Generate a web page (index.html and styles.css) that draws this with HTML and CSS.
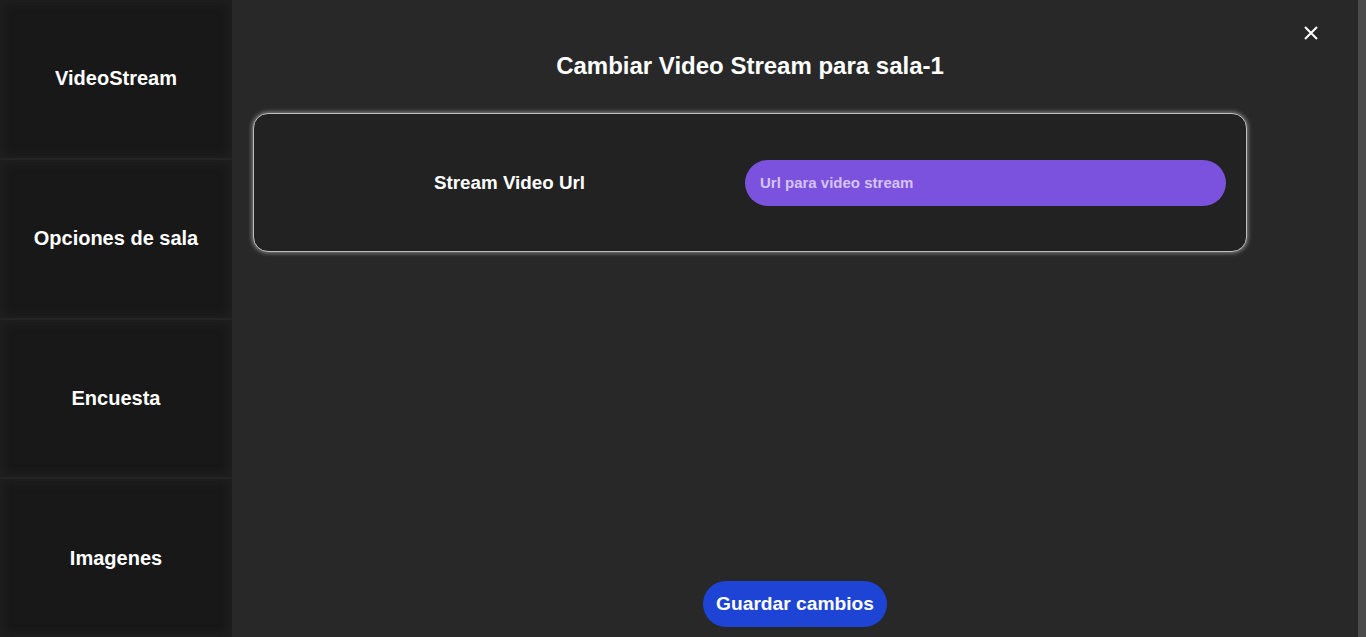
FILE: index.html
```html
<!DOCTYPE html>
<html lang="es">
<head>
<meta charset="utf-8">
<title>Cambiar Video Stream</title>
<link rel="stylesheet" href="styles.css">
</head>
<body>
<div class="app">
  <nav class="sidebar">
    <div class="nav-item">VideoStream</div>
    <div class="nav-item">Opciones de sala</div>
    <div class="nav-item">Encuesta</div>
    <div class="nav-item">Imagenes</div>
  </nav>
  <main class="main">
    <button class="close" aria-label="Cerrar">
      <svg width="16" height="16" viewBox="0 0 16 16"><path d="M2 2L14 14M14 2L2 14" stroke="#fff" stroke-width="2" fill="none"/></svg>
    </button>
    <div class="content">
      <h1 class="title">Cambiar Video Stream para sala-1</h1>
      <div class="card">
        <div class="label">Stream Video Url</div>
        <div class="field"><input class="input" type="text" placeholder="Url para video stream"></div>
      </div>
    </div>
    <div class="footer">
      <button class="save">Guardar cambios</button>
    </div>
  </main>
  <div class="scroll"></div>
</div>
</body>
</html>
```
FILE: styles.css
```css
html, body {
  margin: 0;
  padding: 0;
  height: 100%;
  background: #282828;
  font-family: "Liberation Sans", Arial, sans-serif;
  color: #fff;
  overflow: hidden;
}
.app {
  display: flex;
  height: 637px;
}
.sidebar {
  width: 232px;
  flex: none;
  display: flex;
  flex-direction: column;
  gap: 2px;
  background: #242424;
}
.nav-item {
  flex: 1;
  display: flex;
  align-items: center;
  justify-content: center;
  background: #181818;
  box-shadow: inset 0 0 8px 4px #1f1f1f;
  font-weight: bold;
  font-size: 20px;
}
.main {
  flex: 1;
  position: relative;
  display: flex;
  flex-direction: column;
  background: #282828;
}
.close {
  position: absolute;
  top: 25px;
  right: 39px;
  background: none;
  border: 0;
  padding: 0;
  width: 16px;
  height: 16px;
  cursor: pointer;
}
.close svg { display: block; }
.content {
  padding: 0 111px 0 21px;
  flex: 1;
}
.title {
  margin: 50px 0 31px;
  text-align: center;
  font-size: 24px;
  font-weight: bold;
  line-height: 32px;
}
.card {
  height: 137px;
  border: 1px solid #bdbdbd;
  border-radius: 15px;
  background: #222;
  box-shadow: 0 0 4px 1px #888;
  display: flex;
  align-items: center;
  padding: 0 20px 0 20px;
}
.label {
  width: 471px;
  flex: none;
  text-align: center;
  font-size: 18.8px;
  font-weight: bold;
}
.field { flex: 1; }
.input {
  display: block;
  width: 100%;
  box-sizing: border-box;
  height: 46px;
  border: 0;
  border-radius: 23px;
  background: #7b52de;
  padding: 0 15px;
  font-family: "Liberation Sans", Arial, sans-serif;
  font-size: 15px;
  font-weight: bold;
  color: #fff;
  outline: none;
}
.input::placeholder { color: #d5c4f4; }
.footer {
  display: flex;
  justify-content: center;
  padding-bottom: 10px;
}
.save {
  height: 46px;
  padding: 0 13px;
  border: 0;
  border-radius: 23px;
  background: #1e44d6;
  color: #fff;
  font-family: "Liberation Sans", Arial, sans-serif;
  font-size: 19.2px;
  font-weight: bold;
  cursor: pointer;
}
.scroll {
  width: 8px;
  flex: none;
  background: #4b4b4b;
}
```
